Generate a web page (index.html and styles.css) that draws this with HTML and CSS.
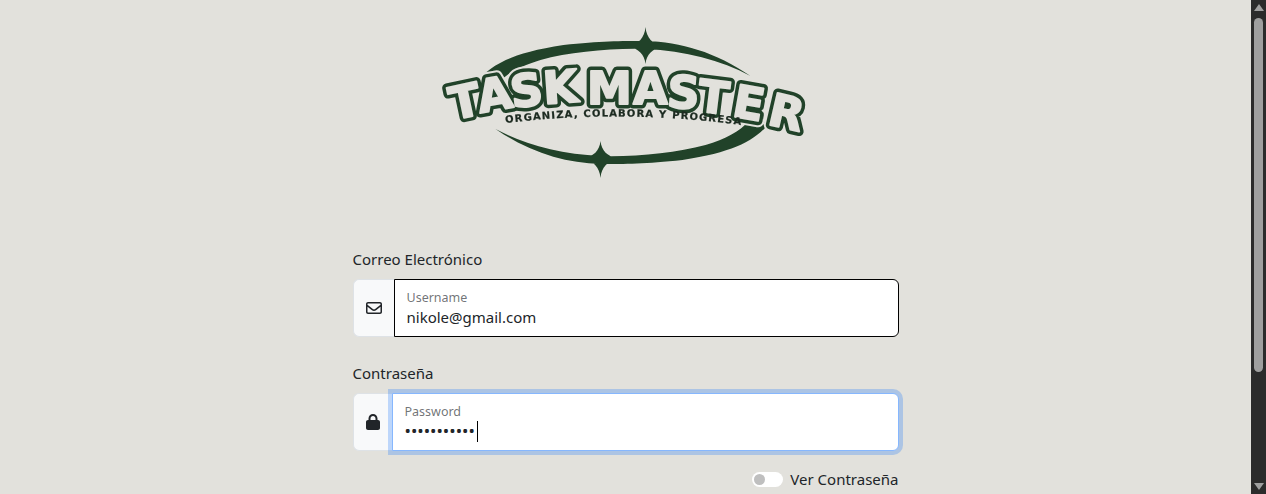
FILE: index.html
```html
<!DOCTYPE html>
<html lang="es">
<head>
<meta charset="utf-8">
<title>Task Master</title>
<link rel="stylesheet" href="styles.css">
</head>
<body>
<main class="page">
  <svg class="logo" viewBox="425.5 10 400 180" width="400" height="180" role="img" aria-label="Task Master">
    <defs>
      <path id="crescent" d="M475 83C490 65 510 53 563 45C600 41 620 41 645 41C680 42 715 52 750 76C720 60 685 51 645 49C610 48 570 52 540 60C520 66 505 74 497 84ZM645 27C646 38 652 44 662 46C652 49 646 54 645 64C644 54 638 49 628 46C638 44 644 38 645 27Z"/>
      <text id="title" class="title" x="468 497 528 561 583 609 650 682 711 746 783" y="120 113 108 104 100 104 104 107 111 116 124" rotate="-12 -10 -7 -4 0 0 0 4 7 10 13">TASK MASTER</text>
      <path id="subarc" d="M505 123Q622 109 741 125"/>
    </defs>
    <use href="#crescent" class="dark"/>
    <use href="#crescent" class="dark" transform="rotate(180 622.5 102.5)"/>
    <use href="#title" class="halo"/>
    <use href="#title" class="outline"/>
    <use href="#title" class="letters"/>
    <text class="tagline"><textPath href="#subarc" textLength="236" lengthAdjust="spacing">ORGANIZA, COLABORA Y PROGRESA</textPath></text>
  </svg>

  <form class="form">
    <label class="label">Correo Electrónico</label>
    <div class="group">
      <span class="addon">
        <svg class="icon icon-mail" viewBox="0 0 512 512"><path d="M64 112c-8.800 0-16 7.200-16 16v22.100L220.500 291.700c20.700 17 50.400 17 71.100 0L464 150.100V128c0-8.800-7.200-16-16-16H64zM48 212.200V384c0 8.800 7.200 16 16 16H448c8.800 0 16-7.200 16-16V212.200L322 328.800c-38.400 31.500-93.700 31.500-132 0L48 212.200zM0 128C0 92.700 28.700 64 64 64H448c35.300 0 64 28.700 64 64V384c0 35.300-28.700 64-64 64H64c-35.300 0-64-28.700-64-64V128z"/></svg>
      </span>
      <div class="field field-idle">
        <span class="float">Username</span>
        <span class="value">nikole@gmail.com</span>
      </div>
    </div>

    <label class="label label-next">Contraseña</label>
    <div class="group">
      <span class="addon">
        <svg class="icon icon-lock" viewBox="0 0 448 512"><path d="M144 144v48H304V144c0-44.200-35.800-80-80-80s-80 35.800-80 80zM80 192V144C80 64.500 144.500 0 224 0s144 64.500 144 144v48h16c35.300 0 64 28.700 64 64V448c0 35.300-28.700 64-64 64H64c-35.300 0-64-28.700-64-64V256c0-35.300 28.700-64 64-64H80z"/></svg>
      </span>
      <div class="field field-focus">
        <span class="float">Password</span>
        <span class="value dots"><span>•••••••••••</span><i class="caret"></i></span>
      </div>
    </div>

    <div class="switch-row">
      <span class="switch"><i class="knob"></i></span>
      <span class="switch-label">Ver Contraseña</span>
    </div>
  </form>
</main>

<aside class="scrollbar" aria-hidden="true">
  <span class="arrow arrow-up"></span>
  <span class="thumb"></span>
  <span class="track"></span>
  <span class="arrow arrow-down"></span>
</aside>
</body>
</html>
```

FILE: styles.css
```css
* { box-sizing: border-box; }

html, body {
  height: 100%;
  margin: 0;
}

body {
  display: flex;
  overflow: hidden;
  background: #e2e1dc;
  color: #212529;
  font-family: "Noto Sans", "Open Sans", sans-serif;
  font-size: 15px;
}

.page {
  flex: 1;
  min-width: 0;
  display: flex;
  flex-direction: column;
  align-items: center;
  padding-top: 10px;
}

.logo {
  display: block;
  flex: none;
  filter: blur(0.35px);
}

.dark { fill: #214229; }

.title {
  font-family: "DejaVu Sans", "Liberation Sans", sans-serif;
  font-weight: 700;
  font-size: 45px;
  text-anchor: middle;
  stroke-linejoin: round;
}

.halo { fill: #e2e1dc; stroke: #e2e1dc; stroke-width: 13px; }
.outline { fill: #214229; stroke: #214229; stroke-width: 9px; }
.letters { fill: #e2e1dc; stroke: #e2e1dc; stroke-width: 2px; }

.tagline {
  font-family: "DejaVu Sans", "Liberation Sans", sans-serif;
  font-weight: 700;
  font-size: 10px;
  fill: #1c2a20;
  stroke: #1c2a20;
  stroke-width: 0.25px;
}

.form {
  width: 546px;
  flex: none;
  margin-top: 59px;
  display: flex;
  flex-direction: column;
}

.label {
  display: block;
  height: 20px;
  line-height: 20px;
  margin-bottom: 10px;
}

.label-next { margin-top: 26px; }

.group {
  display: flex;
  height: 58px;
}

.addon {
  flex: none;
  display: flex;
  align-items: center;
  padding: 0 12px;
  background: #f8f9fa;
  border: 1px solid #dee2e6;
  border-right: 0;
  border-radius: 6px 0 0 6px;
}

.icon {
  display: block;
  height: 16px;
  fill: #212529;
}

.icon-mail { width: 16px; }
.icon-lock { width: 14px; }

.field {
  flex: 1;
  min-width: 0;
  display: flex;
  flex-direction: column;
  background: #fff;
  padding: 9px 12px 0;
}

.field-idle {
  border: 1px solid #000;
  border-radius: 0 6px 6px 0;
}

.field-focus {
  position: relative;
  border: 1px solid #86b7fe;
  border-radius: 0 6px 6px 0;
  box-shadow: 0 0 0 4px rgba(13, 110, 253, .25);
}

.float {
  font-size: 12.5px;
  line-height: 17px;
  color: rgba(33, 37, 41, .65);
}

.value {
  font-size: 15px;
  line-height: 22px;
}

.dots {
  display: flex;
  align-items: center;
  font-size: 17px;
}

.caret {
  display: block;
  width: 1px;
  height: 21px;
  margin-left: 2px;
  background: #000;
}

.switch-row {
  display: flex;
  align-items: center;
  justify-content: flex-end;
  gap: 7px;
  margin-top: 18px;
  height: 20px;
}

.switch {
  display: flex;
  align-items: center;
  width: 31px;
  height: 15px;
  padding-left: 2px;
  background: #fff;
  border-radius: 8px;
}

.knob {
  display: block;
  width: 11px;
  height: 11px;
  border-radius: 50%;
  background: #bfbfbf;
}

.switch-label { white-space: nowrap; }

.scrollbar {
  flex: none;
  width: 15px;
  height: 100%;
  display: flex;
  flex-direction: column;
  align-items: center;
  background: #2b2b2b;
}

.arrow {
  flex: none;
  width: 0;
  height: 0;
  border-left: 5px solid transparent;
  border-right: 5px solid transparent;
}

.arrow-up {
  margin-top: 4px;
  border-bottom: 7px solid #9f9f9f;
}

.arrow-down {
  margin-bottom: 4px;
  border-top: 7px solid #9f9f9f;
}

.thumb {
  flex: none;
  width: 9px;
  height: 354px;
  margin-top: 7px;
  background: #9f9f9f;
  border-radius: 5px;
}

.track { flex: 1; }
```
